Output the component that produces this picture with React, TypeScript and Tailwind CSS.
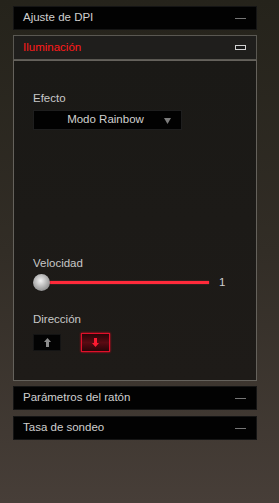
import React from "react";

const font = { fontFamily: '"Liberation Sans", Arial, sans-serif' };

function CollapsedHeader({ title }: { title: string }) {
  return (
    <div className="flex h-[24px] items-center justify-between border border-[#151515] bg-[#020202] pl-[9px] pr-[10px]">
      <span className="text-[11.5px] text-[#cfcfcf]">{title}</span>
      <span className="block h-px w-[11px] bg-[#767676]" />
    </div>
  );
}

export default function App() {
  return (
    <div
      className="h-[503px] w-[279px] overflow-hidden bg-gradient-to-b from-[#25231b] via-[#322d26] to-[#473e38] pl-[13px] pr-[22px] pt-[6px]"
      style={font}
    >
      <CollapsedHeader title="Ajuste de DPI" />
      <div className="mt-[5px]">
        <div className="flex h-[25px] items-center justify-between border border-[#5a5852] bg-[#1f1e1c] pl-[9px] pr-[10px]">
          <span className="text-[11.5px] text-[#ff1a1a]">Iluminación</span>
          <span className="block h-[5px] w-[11px] border border-[#d0d0d0] bg-[#1a1a1a]" />
        </div>
        <div className="h-[321px] border border-[#65625c] bg-gradient-to-b from-[#1a1916] to-[#1e1b18] pl-[19px] pt-[31px]">
          <div className="text-[11.5px] leading-[13px] text-[#c8c8c8]">Efecto</div>
          <div className="relative mt-[5px] flex h-[20px] w-[149px] items-center justify-center border border-[#1e1e1e] bg-[#020202]">
            <span className="-ml-[4px] text-[11.5px] text-[#d0d0d0]">Modo Rainbow</span>
            <svg className="absolute right-[10px] top-[7px]" width="7" height="6" viewBox="0 0 7 6">
              <path d="M0 0 L7 0 L3.5 6 Z" fill="#7c7c7c" />
            </svg>
          </div>

          <div className="mt-[127px] text-[11.5px] leading-[13px] text-[#c8c8c8]">Velocidad</div>
          <div className="mt-[4px] flex h-[17px] items-center">
            <div className="relative flex h-[17px] w-[176px] items-center">
              <div className="absolute left-[14px] right-0 h-[3px] bg-[#ff2a3a] shadow-[0_0_1px_#ff6070]" />
              <div className="relative h-[17px] w-[17px] rounded-full bg-[radial-gradient(circle_at_45%_40%,#f2f2f2,#a8a8a8_55%,#6d6d6d)] shadow-[0_0_1px_#000]" />
            </div>
            <span className="ml-[10px] text-[11.5px] text-[#d0d0d0]">1</span>
          </div>

          <div className="mt-[22px] text-[11.5px] leading-[13px] text-[#c8c8c8]">Dirección</div>
          <div className="mt-[7px] flex items-center gap-[20px]">
            <div className="flex h-[17px] w-[28px] items-center justify-center border border-[#141414] bg-[#030303]">
              <svg width="7" height="9" viewBox="0 0 7 9">
                <path d="M3.5 0 L7 4 L5 4 L5 9 L2 9 L2 4 L0 4 Z" fill="#8c8c8c" />
              </svg>
            </div>
            <div className="flex h-[19px] w-[29px] items-center justify-center border border-[#e0102a] bg-gradient-to-b from-[#2a0508] via-[#5a0a12] to-[#2a0508] shadow-[0_0_2px_#ff0020]">
              <svg width="7" height="9" viewBox="0 0 7 9">
                <path d="M2 0 L5 0 L5 5 L7 5 L3.5 9 L0 5 L2 5 Z" fill="#ff1a30" />
              </svg>
            </div>
          </div>
        </div>
      </div>
      <div className="mt-[5px]">
        <CollapsedHeader title="Parámetros del ratón" />
      </div>
      <div className="mt-[6px]">
        <CollapsedHeader title="Tasa de sondeo" />
      </div>
    </div>
  );
}
